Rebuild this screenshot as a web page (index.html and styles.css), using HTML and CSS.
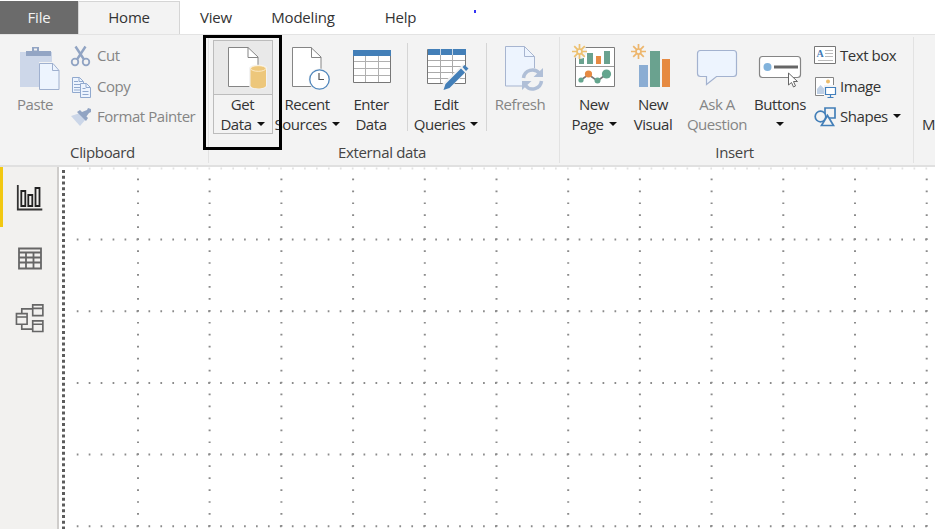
FILE: index.html
```html
<!DOCTYPE html>
<html lang="en">
<head>
<meta charset="utf-8">
<title>Report editor</title>
<link rel="stylesheet" href="styles.css">
</head>
<body>
<div class="app">
  <nav class="tabs">
    <span class="tab file">File</span>
    <span class="tab home">Home</span>
    <span class="tab view">View</span>
    <span class="tab modeling">Modeling</span>
    <span class="tab help">Help</span>
    <i class="speck"></i>
  </nav>
  <section class="ribbon">
    <div class="group clipboard">
      <div class="tools">
        <div class="tool paste off">
          <svg viewBox="8 40 54 55"><path fill="#cdd7e9" d="M20 52h32v10H39v25H20z"/><path fill="#93a5c4" d="M26 51h6v-4h7v4h12v5H26z"/><path fill="#f3f3f3" d="M34 48.500h3v2h-3z"/><path d="M39.500 63.500H53l6 7v19H39.500z" fill="#edf4fe" stroke="#9fb0cf"/><path d="M52.500 63.500v7h6.500" fill="none" stroke="#9fb0cf"/></svg>
          <span>Paste</span>
        </div>
        <ul class="list off">
          <li><svg viewBox="70 45 22 22"><g fill="none" stroke="#91a4c3" stroke-width="1.800"><circle cx="75" cy="62" r="3.300"/><circle cx="86" cy="62" r="3.300"/><path stroke-width="2.400" d="M75.500 46.500l8.500 13M85.500 46.500l-8.500 13"/></g></svg><span>Cut</span></li>
          <li><svg viewBox="70 75 22 22"><g fill="#edf4fe" stroke="#91a9ce"><path d="M72.500 76.500h7l4 4v11h-11z"/><path d="M79 76.500v4h4M74 80.500h4M74 83.500h6M74 86.500h6M74 89h6" fill="none"/><path d="M80.500 82.500h6l4 4v10h-10z"/><path d="M86 82.500v4h4M82.500 87.500h3M82.500 90.500h6M82.500 93.500h6" fill="none"/></g></svg><span>Copy</span></li>
          <li><svg viewBox="70 106 22 22"><path fill="#cbd6e8" d="M71 116l9-3 6 6-6 7z"/><path fill="#91a4c3" d="M77 112l3-2 8 8-2 3zM82 112l5-2 1-2 3 1v3l-2 1-3 4z"/></svg><span>Format Painter</span></li>
        </ul>
      </div>
      <div class="caption">Clipboard</div>
    </div>

    <div class="group external">
      <div class="tools">
        <div class="tool get-data">
          <svg viewBox="213 41 58 53"><path d="M227.500 47.500H247l10 9.500v29.500h-29.500z" fill="#fff" stroke="#858585"/><path d="M247 47.500v10h10" fill="none" stroke="#858585"/><path d="M248 68.500c0-5 18-5 18 0v17c0 5-18 5-18 0z" fill="#f3f3f3"/><path d="M249.500 68.500v17c0 4 15.500 4 15.500 0v-17z" fill="#edc77b"/><ellipse cx="257.250" cy="68.500" rx="7.600" ry="2.800" fill="#edc77b" stroke="#fff3d8" stroke-width=".8"/></svg>
          <span>Get<br>Data<i class="caret"></i></span>
        </div>
        <div class="tool recent">
          <svg viewBox="274 40 66 55"><path d="M292.500 47.500H311l10 9.500v29.500h-28.500z" fill="#fff" stroke="#858585"/><path d="M311.500 47.500v10h9.500" fill="none" stroke="#858585"/><circle cx="319.500" cy="79.500" r="11" fill="#f3f3f3"/><circle cx="319.500" cy="79.500" r="9.700" fill="#fff" stroke="#4f86bc" stroke-width="1.300"/><path d="M319 73v6.500h5" fill="none" stroke="#555" stroke-width="1.200"/></svg>
          <span>Recent<br>Sources<i class="caret"></i></span>
        </div>
        <div class="tool enter">
          <svg viewBox="346 40 50 55"><path d="M353.500 50.500h37v32h-37z" fill="#fff" stroke="#777"/><path d="M354 61.500h36M354 68.500h36M354 75.500h36M365.500 56v26M378.500 56v26" stroke="#b0b0b0"/><path fill="#437fb8" d="M353 50h38v6h-38z"/></svg>
          <span>Enter<br>Data</span>
        </div>
        <i class="rule"></i>
        <div class="tool edit">
          <svg viewBox="413 40 66 55"><path d="M427.500 49.500h38v34h-38z" fill="#fff" stroke="#777"/><path d="M428 60.500h37M428 66.500h37M428 72.500h37M428 78.500h37M440.500 55v28M452.500 55v28" stroke="#aaa"/><path fill="#437fb8" d="M428 49h38v6h-38z"/><path d="M440.500 49v6M452.500 49v6" stroke="#c8d7e7"/><path d="M445 87l21-20" stroke="#f3f3f3" stroke-width="8"/><path fill="#437fb8" d="M443.500 90l2-6 15.500-15.500 4 4L449.500 88zM462.500 67l2-2 4 3.500-2.500 2.500z"/></svg>
          <span>Edit<br>Queries<i class="caret"></i></span>
        </div>
        <i class="rule"></i>
        <div class="tool refresh off">
          <svg viewBox="492 40 58 55"><path d="M506.500 46.500h19l10 10v29.500h-29z" fill="#edf4fe" stroke="#a7b5d0"/><path d="M525.500 46.500v10h10" fill="none" stroke="#a7b5d0"/><circle cx="533.500" cy="79" r="11" fill="#f3f3f3"/><path d="M524.500 78a9 9 0 0 1 16-4.500M542.500 81a9 9 0 0 1-16 4.500" fill="none" stroke="#b0bfd7" stroke-width="3.500"/><path fill="#b0bfd7" d="M544 68v9h-9.500zM523 90v-9h9.500z"/></svg>
          <span>Refresh</span>
        </div>
      </div>
      <div class="caption">External data</div>
    </div>

    <div class="group insert">
      <div class="tools">
        <div class="tool new-page">
          <svg viewBox="566 40 56 55"><path d="M575.500 47.500h39v39h-39z" fill="#fff" stroke="#7d7d7d"/><path d="M576 66.500h38" stroke="#999"/><path d="M579 58h5v6h-5zM587 53h6v11h-6zM604 51h6v13h-6z" fill="#6aa28f"/><path d="M596 56h5v8h-5z" fill="#e68a42"/><path d="M581 80l7.500-5.500L597.500 81l9-7" fill="none" stroke="#777" stroke-width="1.600"/><g fill="#64a58e"><circle cx="581" cy="80" r="2.600"/><circle cx="597.500" cy="80.500" r="3"/><circle cx="606.500" cy="74" r="4.600"/></g><circle cx="588.500" cy="74" r="3.600" fill="#e68a42"/><circle cx="579.500" cy="51.500" r="7.500" fill="#f3f3f3"/><g fill="none" stroke="#edc06f" stroke-width="1.700"><circle cx="579.500" cy="51.500" r="2.500"/><path d="M579.500 44v5M579.500 54v5M572 51.500h5M582 51.500h5M574.200 46.200l3.500 3.500M581.300 53.300l3.500 3.500M584.800 46.200l-3.500 3.500M577.700 53.300l-3.500 3.500"/></g></svg>
          <span>New<br>Page<i class="caret"></i></span>
        </div>
        <div class="tool new-visual">
          <svg viewBox="627 40 52 55"><path fill="#8badd3" d="M639 65h9v22h-9z"/><path fill="#6aa28f" d="M650 51h10v36h-10z"/><path fill="#e68a42" d="M662 59h8v28h-8z"/><g fill="none" stroke="#edb66d" stroke-width="1.700"><circle cx="638.500" cy="51.500" r="2.500"/><path d="M638.500 44v5M638.500 54v5M631 51.500h5M641 51.500h5M633.200 46.200l3.500 3.500M640.300 53.300l3.500 3.500M643.800 46.200l-3.500 3.500M636.700 53.300l-3.500 3.500"/></g></svg>
          <span>New<br>Visual</span>
        </div>
        <div class="tool ask off">
          <svg viewBox="685 40 64 55"><path d="M700.500 50.500h33a3 3 0 0 1 3 3v20a3 3 0 0 1-3 3h-17l-10 8v-8h-6a3 3 0 0 1-3-3v-20a3 3 0 0 1 3-3z" fill="#edf4fe" stroke="#a3b2cf" stroke-width="1.200"/></svg>
          <span>Ask A<br>Question</span>
        </div>
        <div class="tool buttons">
          <svg viewBox="753 40 54 55"><rect x="759.500" y="56.500" width="41" height="21" rx="3" fill="#fff" stroke="#858585" stroke-width="1.200"/><circle cx="767.500" cy="67" r="4" fill="#82b3dc"/><path d="M774 67h24" stroke="#666" stroke-width="3"/><path d="M788.500 73v12l3-2.500 2 4.500 2-1-2-4.500h4z" fill="#fff" stroke="#666"/></svg>
          <span>Buttons<br><i class="caret lone"></i></span>
        </div>
        <ul class="list">
          <li><svg viewBox="814 45 24 22"><path d="M814.500 46.500h21v17h-21z" fill="#fff" stroke="#777"/><path d="M825 50.500h8M825 53.500h8M825 56.500h8M818 60.500h15" stroke="#bbb"/><text x="816.500" y="56.500" class="glyph">A</text></svg><span>Text box</span></li>
          <li><svg viewBox="814 75 24 22"><path d="M815.500 76.500h18v18h-18z" fill="#fff" stroke="#858585"/><circle cx="828" cy="80.500" r="2" fill="#edbd6c"/><path d="M817 93v-5l3.500-4 4 4v5z" fill="#bfd0e5"/><path d="M824 84h14v13h-14z" fill="#f3f3f3"/><path d="M825.500 86.500h10v7h-10zM830.500 94v2M827.500 96.500h6" fill="#fff" stroke="#4380bd" stroke-width="1.200"/></svg><span>Image</span></li>
          <li><svg viewBox="814 106 24 22"><g fill="none" stroke="#437fb8" stroke-width="1.700"><path d="M825 108h10v10h-10z"/><circle cx="820.500" cy="116.500" r="5.300" fill="#f3f3f3"/><path d="M827.500 115.500l6 10h-12z" fill="#f3f3f3"/></g></svg><span>Shapes</span><i class="caret"></i></li>
        </ul>
      </div>
      <div class="caption">Insert</div>
    </div>
    <div class="group more"><span>M</span></div>
    <i class="callout"></i>
  </section>

  <main class="work">
    <aside class="rail">
      <div class="mode on"><svg viewBox="15 183 30 30"><path d="M17.800 185v24.500h24.500" fill="none" stroke="#333" stroke-width="1.800"/><path d="M21.300 191h4v15h-4zM28.300 195h4v11h-4zM35.500 188h4v18h-4z" fill="none" stroke="#222" stroke-width="1.800"/></svg></div>
      <div class="mode"><svg viewBox="15 243 30 30"><path d="M19 248.500h22v20H19zM19 252.500h22M19 257.500h22M19 262.500h22M26 252v16M33.500 252v16" fill="none" stroke="#666" stroke-width="1.800"/></svg></div>
      <div class="mode"><svg viewBox="15 303 30 31"><g fill="none" stroke="#666" stroke-width="1.700"><path d="M32.800 305h10.500v11H32.800zM33 308.500h10M32.800 321.500h10.500v11H32.800zM33 325h10M16 314h11v11H16zM16 317.500h11M21.500 314v-5h11M21.500 325v5h11"/></g></svg></div>
    </aside>
    <svg class="canvas" viewBox="59 167 876 362">
      <path class="edge" d="M63.500 170v359"/>
      <path class="dots faint" d="M77 168.500h858"/>
      <path class="dots" d="M76.750 239.500H935M76.750 311.200H935M76.750 382.900H935M76.750 454.500H935M76.750 526.200H935"/>
      <path class="dots" d="M138 178.500V529M209.600 178.500V529M281.400 178.500V529M353.100 178.500V529M424.800 178.500V529M496.500 178.500V529M568.200 178.500V529M639.900 178.500V529M711.600 178.500V529M783.300 178.500V529M855 178.500V529M926.700 178.500V529"/>
    </svg>
  </main>
</div>
</body>
</html>
```
FILE: styles.css
```css
* { box-sizing: border-box; }
body {
  margin: 0;
  background: #fff;
  color: #333;
  font: 15px/20px "Open Sans", "Noto Sans", sans-serif;
  letter-spacing: -0.2px;
}
svg { display: block; flex: none; }
.app { width: 935px; height: 529px; overflow: hidden; display: flex; flex-direction: column; }

.tabs { display: flex; height: 34px; padding-top: 1px; position: relative; }
.tab { text-align: center; line-height: 32px; white-space: nowrap; }
.file { width: 78px; height: 33px; background: #6b6b6b; color: #f3f3f3; }
.home { width: 102px; height: 34px; background: #f3f3f3; border: 1px solid #d5d5d5; border-bottom: 0; line-height: 30px; }
.view { width: 72px; }
.modeling { width: 102px; }
.help { width: 93px; }
.speck { position: absolute; left: 474px; top: 10px; width: 2px; height: 3px; background: #3434f4; }

.ribbon { display: flex; position: relative; height: 133px; flex: none; background: #f3f3f3; border-top: 1px solid #e3e3e3; border-bottom: 2px solid #e0e0e0; letter-spacing: -0.45px; }
.group { border-right: 1px solid #e2e2e2; height: 126px; margin-top: 2px; padding-top: 3px; flex: none; }
.clipboard { width: 209px; }
.external { width: 351px; }
.insert { width: 354px; }
.more { width: 21px; padding: 77px 0 0 8px; border: 0; overflow: hidden; }
.tools { display: flex; height: 102px; }
.caption { text-align: center; line-height: 20px; color: #444; letter-spacing: -0.35px; }
.clipboard .caption { padding-right: 3px; }
.external .caption { padding-right: 4px; }
.insert .caption { padding-right: 4px; }
.tool { text-align: center; flex: none; white-space: nowrap; color: #333; }
.tool.off { color: #858585; }
.tool svg { width: 100%; height: 55px; }
.tool > span { display: block; margin-top: -1px; }
.off { color: #858585; }
.paste { width: 54px; margin-left: 8px; }
.get-data { width: 60px; height: 94px; margin-left: 4px; border: 1px solid #bcbcbc; }
.get-data svg { height: 54px; background: #e9e9e9; border-bottom: 1px solid #bcbcbc; }
.get-data > span { margin-right: 1px; }
.recent { width: 66px; margin-left: 1px; }
.enter { width: 50px; margin-left: 6px; }
.rule { width: 1px; height: 88px; background: #d5d5d5; margin: 3px 5px 0 11px; }
.edit { width: 66px; }
.edit + .rule { margin: 3px 4px 0 7px; }
.refresh { width: 58px; }
.new-page { width: 56px; margin-left: 6px; }
.new-visual { width: 52px; margin-left: 5px; }
.ask { width: 64px; margin-left: 6px; }
.buttons { width: 54px; margin-left: 4px; }
.caret { display: inline-block; border: 4px solid transparent; border-top-color: #111; border-bottom: 0; margin-left: 5px; vertical-align: 4px; }
.lone { margin-left: 0; }
.list { list-style: none; margin: 0; padding: 5px 0 0; }
.list li { display: flex; height: 22px; margin-bottom: 8.7px; align-items: center; white-space: nowrap; }
.list span, .list .caret { margin-bottom: 2px; }
.clipboard .list { margin-left: 8px; }
.clipboard .list svg { width: 22px; height: 22px; margin-right: 5px; }
.insert .list { margin-left: 7px; }
.insert .list svg { width: 24px; height: 22px; margin-right: 2px; }
.glyph { font: bold 10px "Liberation Serif", serif; fill: #3f79b5; }
.callout { position: absolute; left: 203px; top: 0; width: 79px; height: 115px; border: 3px solid #000; }

.work { display: flex; flex: 1; min-height: 0; }
.rail { width: 59px; background: #f2f1ef; border-right: 2px solid #cfcdcb; display: flex; flex-direction: column; }
.mode { height: 60px; padding: 16px 0 0 15px; }
.mode.on { border-left: 3px solid #f2c811; padding-left: 12px; }
.mode svg { width: 30px; height: 30px; }
.canvas { width: 876px; height: 362px; }
.canvas path { fill: none; }
.canvas .edge { stroke: #5c5c5c; stroke-width: 3; stroke-dasharray: 3 2.75; }
.canvas .dots { stroke: #8b8b8b; stroke-width: 2; stroke-dasharray: 1.7 10.25; }
.canvas .faint { stroke: #e2e2e2; }
```
